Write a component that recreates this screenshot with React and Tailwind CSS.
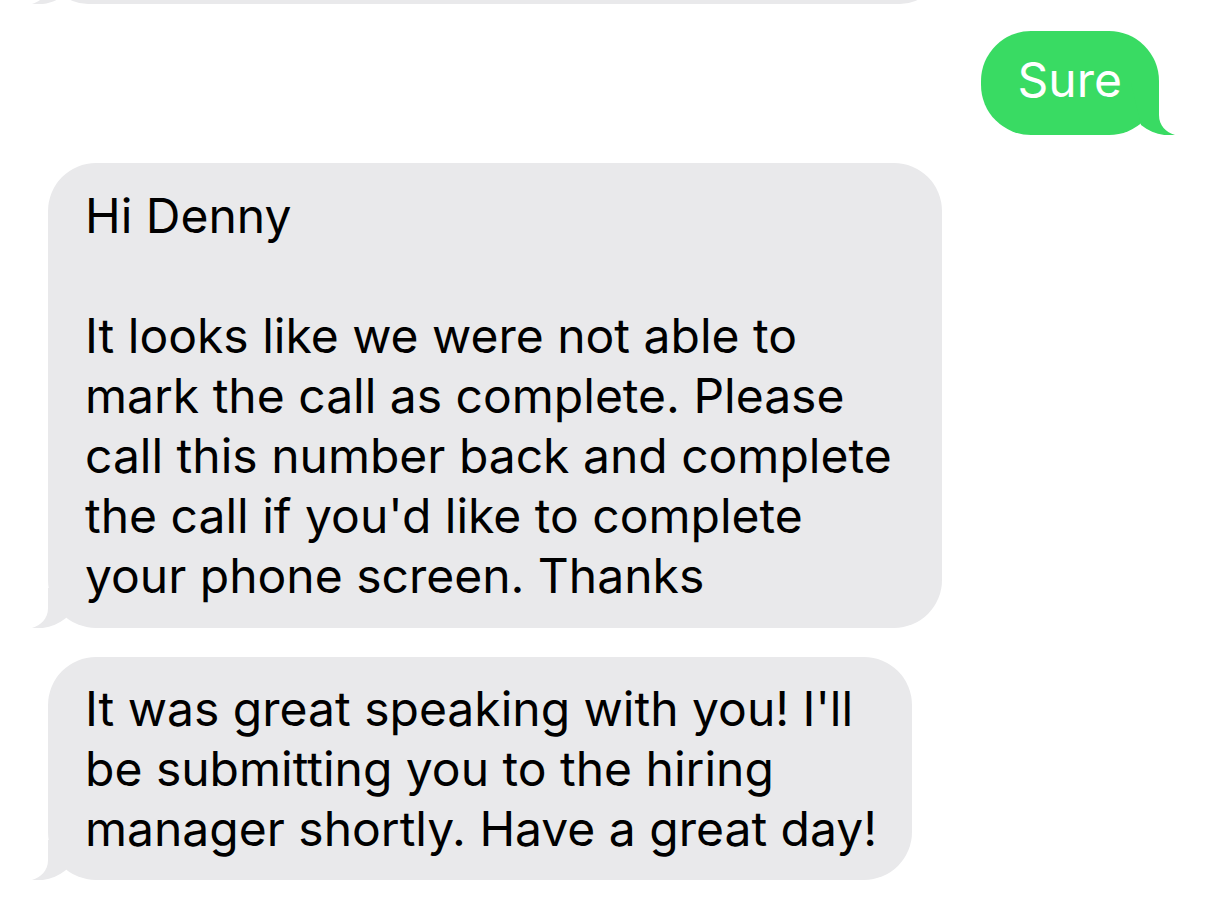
import React from "react";

function Tail({ color, side = "left" }) {
  if (side === "left") {
    return (
      <svg className="absolute bottom-0 left-[-16px] w-[40px] h-[40px]" viewBox="0 0 40 40" fill={color}>
        <path d="M16 0 L16 20 C16 31 9 37 0 40 C12 41.5 24 38 34 30 L40 0 Z" />
      </svg>
    );
  }
  return (
    <svg className="absolute bottom-0 right-[-16px] w-[44px] h-[52px] -scale-x-100" viewBox="0 0 44 52" fill={color}>
      <path d="M16 0 L16 32 C16 43 9 49 0 52 C12 53.5 24 50 34 42 L44 0 Z" />
    </svg>
  );
}

function GrayBubble({ className, children }) {
  return (
    <div className={`relative ml-[48px] rounded-[48px] bg-[#e9e9eb] ${className}`}>
      <Tail color="#e9e9eb" side="left" />
      <div className="relative text-[48px] leading-[60px] text-black">
        {children}
      </div>
    </div>
  );
}

export default function App() {
  return (
    <div
      className="w-[1206px] h-[923px] bg-white overflow-hidden flex flex-col"
      style={{ fontFamily: "Inter, 'Noto Sans', sans-serif" }}
    >
      <div className="relative ml-[48px] mt-[-76px] w-[892px] h-[80px] shrink-0 rounded-[48px] bg-[#e9e9eb]">
        <Tail color="#e9e9eb" side="left" />
      </div>

      <div className="relative self-end mr-[47px] mt-[27px] h-[104px] shrink-0 rounded-[50px] bg-[#39db63] pl-[37px] pr-[37px] pt-[19px] pb-[25px]">
        <Tail color="#39db63" side="right" />
        <div className="relative text-[48px] leading-[60px] text-white">Sure</div>
      </div>

      <GrayBubble className="mt-[28px] w-[894px] pl-[37px] pt-[23px] pb-[22px] shrink-0">
        Hi Denny
        <br />
        <br />
        It looks like we were not able to
        <br />
        mark the call as complete. Please
        <br />
        call this number back and complete
        <br />
        the call if you'd like to complete
        <br />
        your phone screen. Thanks
      </GrayBubble>

      <GrayBubble className="mt-[29px] w-[864px] pl-[37px] pt-[22px] pb-[21px] shrink-0">
        It was great speaking with you! I'll
        <br />
        be submitting you to the hiring
        <br />
        manager shortly. Have a great day!
      </GrayBubble>
    </div>
  );
}
